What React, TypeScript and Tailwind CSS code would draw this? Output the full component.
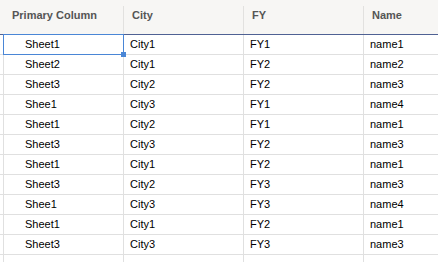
import React from "react";

type Row = [string, string, string, string];

const rows: Row[] = [
  ["Sheet1", "City1", "FY1", "name1"],
  ["Sheet2", "City1", "FY2", "name2"],
  ["Sheet3", "City2", "FY2", "name3"],
  ["Shee1", "City3", "FY1", "name4"],
  ["Sheet1", "City2", "FY1", "name1"],
  ["Sheet3", "City3", "FY2", "name3"],
  ["Sheet1", "City1", "FY2", "name1"],
  ["Sheet3", "City2", "FY3", "name3"],
  ["Shee1", "City3", "FY3", "name4"],
  ["Sheet1", "City1", "FY2", "name1"],
  ["Sheet3", "City3", "FY3", "name3"],
  ["", "", "", ""],
];

const headers = ["Primary Column", "City", "FY", "Name"];

export default function App() {
  return (
    <div
      className="w-[438px] h-[262px] overflow-hidden bg-white text-black"
      style={{ fontFamily: '"Liberation Sans", Arial, sans-serif' }}
    >
      {/* column headers */}
      <div className="flex h-[35px] bg-[#f7f6f4] border-b border-[#4f6193]">
        <div className="w-[4px] shrink-0" />
        {headers.map((h, i) => (
          <div
            key={h}
            className={`${i === 3 ? "flex-1" : "w-[120px] border-r border-[#e2e1df]"} shrink-0 mt-[6px] pl-[8px] pt-[2px] text-[11px] font-bold text-[#555555] leading-[14px]`}
          >
            {h}
          </div>
        ))}
      </div>

      {/* grid body */}
      {rows.map((r, ri) => (
        <div key={ri} className="flex h-[20px] border-b border-[#e0e0e0]">
          <div className="w-[4px] shrink-0 border-r border-[#e0e0e0]" />
          {r.map((c, ci) => (
            <div
              key={ci}
              className={`${ci === 3 ? "flex-1" : "w-[120px] border-r border-[#e0e0e0]"} shrink-0 flex items-center text-[11px] leading-none ${ci === 0 ? "pl-[21px]" : "pl-[6px]"} ${ri === 0 && ci === 0 ? "relative" : ""}`}
            >
              {c}
              {ri === 0 && ci === 0 && (
                <div className="absolute -left-[1px] -top-[1px] w-[121px] h-[21px] border border-[#4a86d6]">
                  <div className="absolute -right-[3px] -bottom-[3px] w-[5px] h-[5px] bg-[#4a86d6]" />
                </div>
              )}
            </div>
          ))}
        </div>
      ))}
    </div>
  );
}
